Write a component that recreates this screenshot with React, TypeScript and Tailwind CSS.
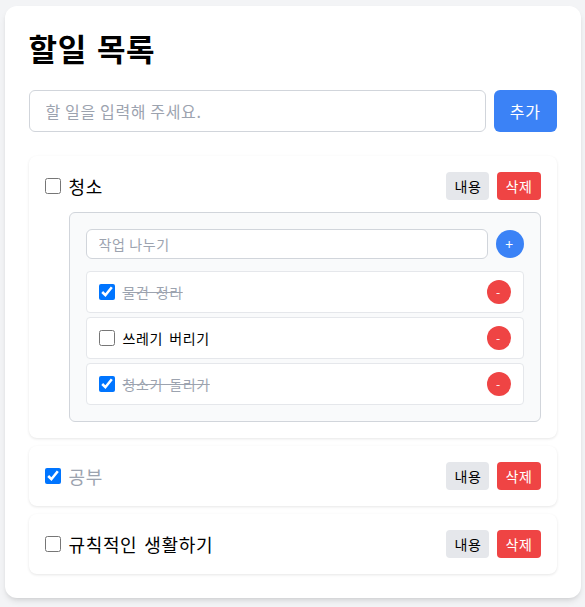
import React, { useState } from 'react';

interface SubTask {
    id: number;
    text: string;
    done: boolean;
}

interface Todo {
    id: number;
    text: string;
    done: boolean;
    open: boolean;
    subtasks: SubTask[];
}

const initialTodos: Todo[] = [
    {
        id: 1,
        text: '청소',
        done: false,
        open: true,
        subtasks: [
            { id: 1, text: '물건 정리', done: true },
            { id: 2, text: '쓰레기 버리기', done: false },
            { id: 3, text: '청소기 돌리기', done: true },
        ],
    },
    { id: 2, text: '공부', done: true, open: false, subtasks: [] },
    { id: 3, text: '규칙적인 생활하기', done: false, open: false, subtasks: [] },
];

export default function App() {
    const [todos, setTodos] = useState<Todo[]>(initialTodos);
    const [input, setInput] = useState('');

    const toggleTodo = (id: number) => {
        setTodos(todos.map((t) => (t.id === id ? { ...t, done: !t.done } : t)));
    };

    const toggleSub = (todoId: number, subId: number) => {
        setTodos(
            todos.map((t) =>
                t.id === todoId
                    ? { ...t, subtasks: t.subtasks.map((s) => (s.id === subId ? { ...s, done: !s.done } : s)) }
                    : t
            )
        );
    };

    return (
        <div className="min-h-screen bg-[#f3f4f6] pt-1.5 font-['Noto_Sans_CJK_KR','Noto_Sans',sans-serif] tracking-[0.04em] [word-spacing:0.15em]">
            <div className="mx-auto max-w-xl rounded-xl bg-white p-6 shadow-md">
                <h1 className="mb-6 text-[31px] leading-9 font-bold text-black">할일 목록</h1>

                <div className="mb-6 flex gap-2">
                    <input
                        value={input}
                        onChange={(e) => setInput(e.target.value)}
                        placeholder="할 일을 입력해 주세요."
                        className="flex-1 rounded-md border border-[#d1d5db] px-4 py-2 text-base outline-none placeholder:text-[#9ca3af]"
                    />
                    <button className="rounded-md bg-[#3b82f6] px-4 py-2 text-base text-white">추가</button>
                </div>

                <div className="space-y-2">
                    {todos.map((todo) => (
                        <div key={todo.id} className="rounded-lg bg-white p-4 shadow-[0_1px_3px_rgba(0,0,0,0.1)]">
                            <div className="flex items-center justify-between">
                                <label className="flex items-center gap-2">
                                    <input
                                        type="checkbox"
                                        checked={todo.done}
                                        onChange={() => toggleTodo(todo.id)}
                                        className="h-4 w-4"
                                    />
                                    <span className={`text-lg ${todo.done ? 'text-[#9ca3af]' : 'text-black'}`}>{todo.text}</span>
                                </label>
                                <div className="flex gap-2">
                                    <button className="rounded bg-[#e5e7eb] px-2 py-1 text-sm text-black">내용</button>
                                    <button className="rounded bg-[#ef4444] px-2 py-1 text-sm text-white">삭제</button>
                                </div>
                            </div>

                            {todo.open && (
                                <div className="ml-6 mt-3 rounded-md border border-[#d1d5db] bg-[#f9fafb] p-4">
                                    <div className="mb-3 flex items-center gap-2">
                                        <input
                                            placeholder="작업 나누기"
                                            className="flex-1 rounded-md border border-[#d1d5db] bg-white px-3 py-1 text-sm outline-none placeholder:text-[#9ca3af]"
                                        />
                                        <button className="flex h-7 w-7 items-center justify-center rounded-full bg-[#3b82f6] text-sm text-white">+</button>
                                    </div>
                                    <div className="space-y-1">
                                        {todo.subtasks.map((sub) => (
                                            <div
                                                key={sub.id}
                                                className="flex items-center justify-between rounded border border-[#e5e7eb] bg-white px-3 py-2"
                                            >
                                                <label className="flex items-center gap-2">
                                                    <input
                                                        type="checkbox"
                                                        checked={sub.done}
                                                        onChange={() => toggleSub(todo.id, sub.id)}
                                                        className="h-4 w-4"
                                                    />
                                                    <span className={`text-sm ${sub.done ? 'text-[#9ca3af] line-through' : 'text-black'}`}>
                                                        {sub.text}
                                                    </span>
                                                </label>
                                                <button className="flex h-6 w-6 items-center justify-center rounded-full bg-[#ef4444] text-xs text-white">-</button>
                                            </div>
                                        ))}
                                    </div>
                                </div>
                            )}
                        </div>
                    ))}
                </div>
            </div>
        </div>
    );
}
